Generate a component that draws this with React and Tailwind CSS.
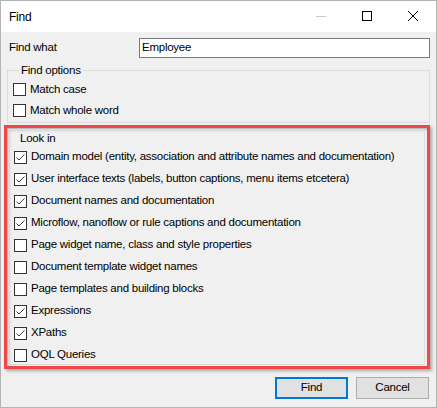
import React from 'react';

const lookIn = [
  { label: 'Domain model (entity, association and attribute names and documentation)', checked: true },
  { label: 'User interface texts (labels, button captions, menu items etcetera)', checked: true },
  { label: 'Document names and documentation', checked: true },
  { label: 'Microflow, nanoflow or rule captions and documentation', checked: true },
  { label: 'Page widget name, class and style properties', checked: false },
  { label: 'Document template widget names', checked: false },
  { label: 'Page templates and building blocks', checked: false },
  { label: 'Expressions', checked: true },
  { label: 'XPaths', checked: true },
  { label: 'OQL Queries', checked: false },
];

const CheckBox = ({ checked }) => (
  <span className="w-[13px] h-[13px] border border-[#333333] bg-white flex items-center justify-center shrink-0">
    {checked && (
      <svg width="11" height="11" viewBox="0 0 11 11">
        <path d="M1.5 5.5 L4 8 L9.5 2.5" fill="none" stroke="#444444" strokeWidth="1" />
      </svg>
    )}
  </span>
);

const Row = ({ label, checked, h }) => (
  <div className={`flex items-center gap-[4px] ${h}`}>
    <CheckBox checked={checked} />
    <span className="whitespace-nowrap">{label}</span>
  </div>
);

export default function App() {
  return (
    <div
      className="w-[437px] h-[408px] border border-[#b4b4b4] bg-[#f0f0f0] text-[11.5px] tracking-[-0.25px] text-black flex flex-col overflow-hidden"
      style={{ fontFamily: '"Liberation Sans", Arial, sans-serif' }}
    >
      {/* title bar */}
      <div className="h-[31px] bg-white flex items-center shrink-0">
        <span className="ml-[8px] text-[12px]">Find</span>
        <div className="ml-auto flex items-center h-full">
          <svg width="46" height="31" viewBox="0 0 46 31">
            <path d="M18 15.5 H28" stroke="#cccccc" strokeWidth="1" />
          </svg>
          <svg width="46" height="31" viewBox="0 0 46 31">
            <rect x="18.5" y="10.5" width="9" height="9" fill="none" stroke="#000000" strokeWidth="1" />
          </svg>
          <svg width="46" height="31" viewBox="0 0 46 31">
            <path d="M18 10 L28 20 M28 10 L18 20" stroke="#000000" strokeWidth="1" />
          </svg>
        </div>
      </div>

      {/* find what */}
      <div className="flex items-center mt-[6px] h-[20px]">
        <span className="ml-[8px] w-[130px]">Find what</span>
        <div className="w-[291px] h-[20px] border border-[#7a7a7a] bg-white flex items-center pl-[2px]">
          Employee
        </div>
      </div>

      {/* find options */}
      <fieldset className="ml-[6px] w-[423px] mt-[5px] border border-[#dcdcdc] pl-[5px] pt-[2px] pb-[1px]">
        <legend className="ml-[6px] px-[2px] leading-[14px]">Find options</legend>
        <Row label="Match case" checked={false} h="h-[21px]" />
        <Row label="Match whole word" checked={false} h="h-[21px]" />
      </fieldset>

      {/* look in (highlighted) */}
      <div className="ml-[3px] mt-[2px] w-[426px] h-[244px] border-[3px] border-[#f04848] shadow-[2px_2px_3px_rgba(0,0,0,0.3),inset_2px_2px_3px_rgba(0,0,0,0.25)] p-[1px] pr-[2px]">
        <div className="h-full border border-[#dcdcdc] pl-[5px]">
          <div className="h-[15px] leading-[15px] pl-[6px] mt-[1px]">Look in</div>
          {lookIn.map((item, i) => (
            <Row key={i} label={item.label} checked={item.checked} h="h-[22px]" />
          ))}
        </div>
      </div>

      {/* buttons */}
      <div className="flex justify-end gap-[8px] mt-[8px] pr-[7px]">
        <button className="w-[73px] h-[22px] border-2 border-[#0078d7] bg-[#e1e1e1] leading-none">Find</button>
        <button className="w-[73px] h-[22px] border border-[#adadad] bg-[#e1e1e1] leading-none">Cancel</button>
      </div>
    </div>
  );
}
